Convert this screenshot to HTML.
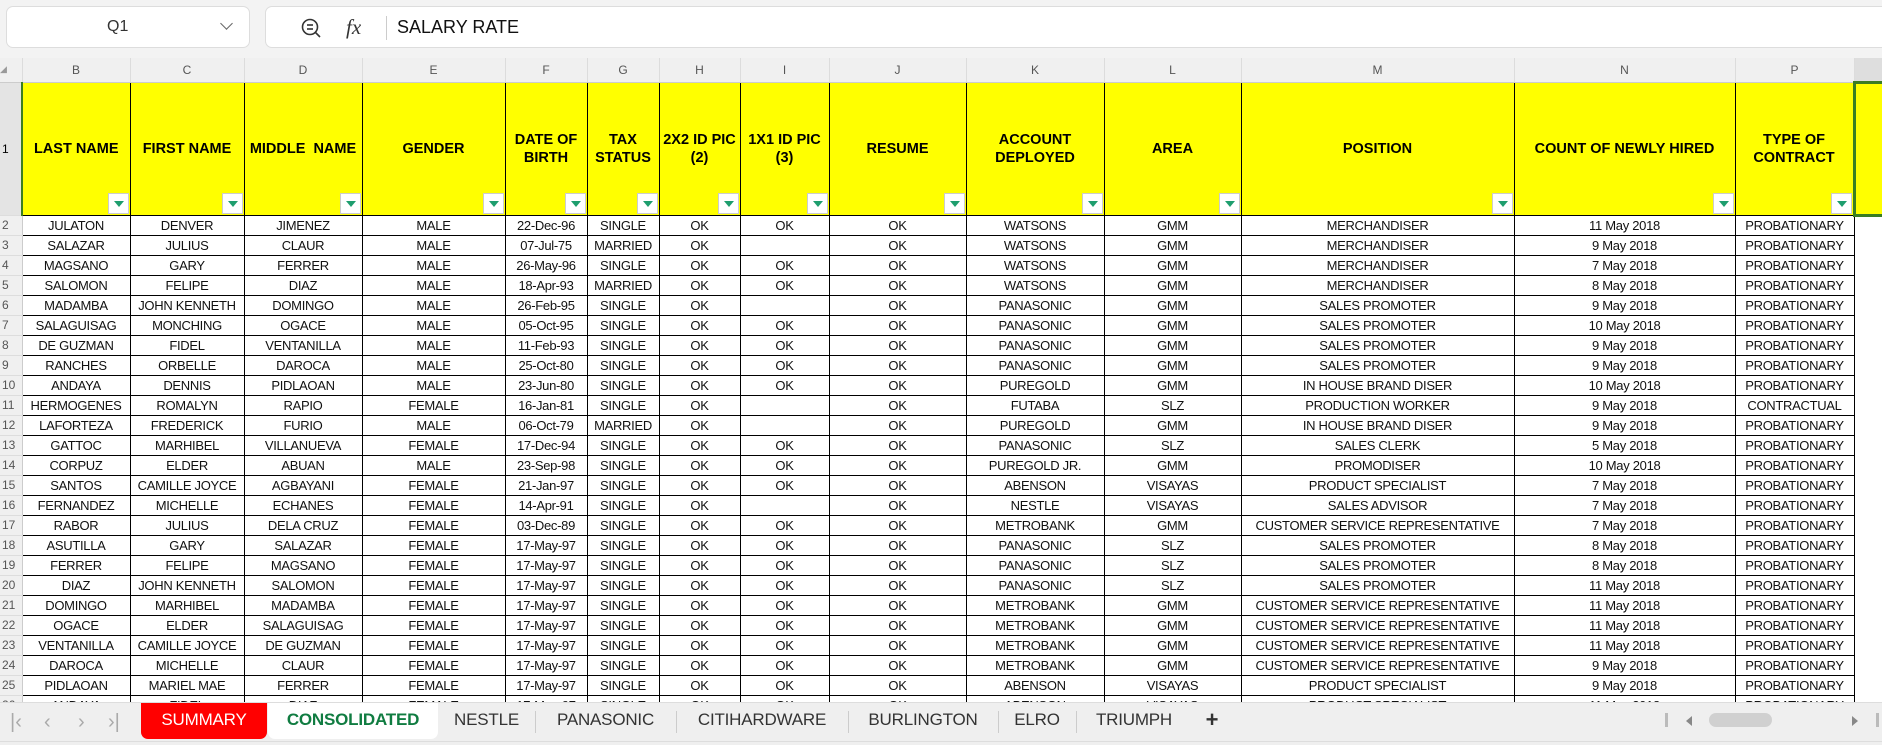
<!DOCTYPE html>
<html><head><meta charset="utf-8">
<style>
*{box-sizing:border-box;margin:0;padding:0}
body{width:1882px;height:745px;overflow:hidden;background:#f3f3f3;font-family:"Liberation Sans",sans-serif;position:relative}
.namebox{position:absolute;left:6px;top:6px;width:244px;height:42px;background:#fff;border:1px solid #ddd;border-radius:7px;font-size:16px;color:#333}
.namebox span{position:absolute;left:100px;top:11px}
.namebox i{position:absolute;right:18px;top:12px;width:9px;height:9px;border-right:1.5px solid #666;border-bottom:1.5px solid #666;transform:rotate(45deg)}
.fbox{position:absolute;left:265px;top:6px;width:1640px;height:42px;background:#fff;border:1px solid #ddd;border-radius:7px}
.fbox .txt{position:absolute;left:131px;top:10px;font-size:18px;color:#111}
.fbox .fx{position:absolute;left:80px;top:8px;font-family:"Liberation Serif",serif;font-style:italic;font-size:21px;color:#333}
.fbox .sep{position:absolute;left:120px;top:9px;width:1px;height:24px;background:#ccc}
.grid{position:absolute;left:0;top:58px;width:1882px;height:644px;overflow:hidden;background:#fff}
table{border-collapse:collapse;table-layout:fixed;position:absolute;left:0;top:0;width:1894px}
td{border:1px solid #000;text-align:center;font-size:13px;letter-spacing:-0.3px;color:#111;height:20px;white-space:nowrap;overflow:hidden;padding:0}
tr.ch td{background:#f0f0f0;border:none;border-right:1px solid #dcdcdc;border-bottom:1px solid #ccc;color:#555;font-size:12px;height:24px;letter-spacing:0}
td.rh{background:#f0f0f0;border:none;border-right:1px solid #ccc;border-bottom:1px solid #ddd;color:#555;font-size:12px;text-align:left;padding-left:2px;letter-spacing:0}
tr.hd td{background:#ffff00;height:133px;font-weight:bold;font-size:14.5px;letter-spacing:0;line-height:18px;white-space:normal;position:relative;color:#000}
tr.hd td.rh{background:#e4e4e4;font-weight:normal;font-size:12px;border-right:2px solid #3a7d22}
.f{position:absolute;right:1px;bottom:1px;width:21px;height:21px;background:#fff;border:1px solid #ccc}
.f:after{content:"";position:absolute;left:5px;top:7px;border-left:5px solid transparent;border-right:5px solid transparent;border-top:6px solid #1e9e6e}
td.q{border:none;border-left:1px solid #000}
tr.hd td.q{border:3px solid #3a7d22;border-right:none}
.tabs{position:absolute;left:0;top:702px;width:1882px;height:43px;background:#efefef;border-top:1px solid #ddd}
.tab{position:absolute;top:0;height:36px;font-size:17px;line-height:34px;text-align:center;color:#333;letter-spacing:-0.2px}
.sep2{position:absolute;top:8px;width:1px;height:22px;background:#ccc}
.nav{position:absolute;top:8px;color:#aaa;font-size:20px}
</style></head><body>
<div class="namebox"><span>Q1</span><i></i></div>
<div class="fbox">
<svg style="position:absolute;left:34px;top:10px" width="24" height="24" viewBox="0 0 24 24" fill="none" stroke="#333" stroke-width="1.6"><circle cx="10" cy="10" r="7.5"/><line x1="7" y1="8" x2="13" y2="8"/><line x1="7" y1="12" x2="13" y2="12"/><line x1="15.5" y1="15.5" x2="20" y2="20"/></svg>
<span class="fx">fx</span><div class="sep"></div><span class="txt">SALARY RATE</span></div>
<div class="grid">
<table>
<colgroup><col style="width:22px"><col style="width:108px"><col style="width:114px"><col style="width:118px"><col style="width:143px"><col style="width:82px"><col style="width:72px"><col style="width:81px"><col style="width:89px"><col style="width:137px"><col style="width:138px"><col style="width:137px"><col style="width:273px"><col style="width:221px"><col style="width:119px"><col style="width:40px"></colgroup>
<tr class="ch"><td style="text-align:left;color:#999;font-size:9px">◢</td><td>B</td><td>C</td><td>D</td><td>E</td><td>F</td><td>G</td><td>H</td><td>I</td><td>J</td><td>K</td><td>L</td><td>M</td><td>N</td><td>P</td><td style="background:#dedede"></td></tr>
<tr class="hd"><td class="rh">1</td><td>LAST NAME<div class="f"></div></td><td>FIRST NAME<div class="f"></div></td><td>MIDDLE &nbsp;NAME<div class="f"></div></td><td>GENDER<div class="f"></div></td><td>DATE OF BIRTH<div class="f"></div></td><td>TAX STATUS<div class="f"></div></td><td>2X2 ID PIC (2)<div class="f"></div></td><td>1X1 ID PIC (3)<div class="f"></div></td><td>RESUME<div class="f"></div></td><td>ACCOUNT DEPLOYED<div class="f"></div></td><td>AREA<div class="f"></div></td><td>POSITION<div class="f"></div></td><td>COUNT OF NEWLY HIRED<div class="f"></div></td><td>TYPE OF CONTRACT<div class="f"></div></td><td class="q"></td></tr>
<tr><td class="rh">2</td><td>JULATON</td><td>DENVER</td><td>JIMENEZ</td><td>MALE</td><td>22-Dec-96</td><td>SINGLE</td><td>OK</td><td>OK</td><td>OK</td><td>WATSONS</td><td>GMM</td><td>MERCHANDISER</td><td>11 May 2018</td><td>PROBATIONARY</td><td class="q"></td></tr>
<tr><td class="rh">3</td><td>SALAZAR</td><td>JULIUS</td><td>CLAUR</td><td>MALE</td><td>07-Jul-75</td><td>MARRIED</td><td>OK</td><td></td><td>OK</td><td>WATSONS</td><td>GMM</td><td>MERCHANDISER</td><td>9 May 2018</td><td>PROBATIONARY</td><td class="q"></td></tr>
<tr><td class="rh">4</td><td>MAGSANO</td><td>GARY</td><td>FERRER</td><td>MALE</td><td>26-May-96</td><td>SINGLE</td><td>OK</td><td>OK</td><td>OK</td><td>WATSONS</td><td>GMM</td><td>MERCHANDISER</td><td>7 May 2018</td><td>PROBATIONARY</td><td class="q"></td></tr>
<tr><td class="rh">5</td><td>SALOMON</td><td>FELIPE</td><td>DIAZ</td><td>MALE</td><td>18-Apr-93</td><td>MARRIED</td><td>OK</td><td>OK</td><td>OK</td><td>WATSONS</td><td>GMM</td><td>MERCHANDISER</td><td>8 May 2018</td><td>PROBATIONARY</td><td class="q"></td></tr>
<tr><td class="rh">6</td><td>MADAMBA</td><td>JOHN KENNETH</td><td>DOMINGO</td><td>MALE</td><td>26-Feb-95</td><td>SINGLE</td><td>OK</td><td></td><td>OK</td><td>PANASONIC</td><td>GMM</td><td>SALES PROMOTER</td><td>9 May 2018</td><td>PROBATIONARY</td><td class="q"></td></tr>
<tr><td class="rh">7</td><td>SALAGUISAG</td><td>MONCHING</td><td>OGACE</td><td>MALE</td><td>05-Oct-95</td><td>SINGLE</td><td>OK</td><td>OK</td><td>OK</td><td>PANASONIC</td><td>GMM</td><td>SALES PROMOTER</td><td>10 May 2018</td><td>PROBATIONARY</td><td class="q"></td></tr>
<tr><td class="rh">8</td><td>DE GUZMAN</td><td>FIDEL</td><td>VENTANILLA</td><td>MALE</td><td>11-Feb-93</td><td>SINGLE</td><td>OK</td><td>OK</td><td>OK</td><td>PANASONIC</td><td>GMM</td><td>SALES PROMOTER</td><td>9 May 2018</td><td>PROBATIONARY</td><td class="q"></td></tr>
<tr><td class="rh">9</td><td>RANCHES</td><td>ORBELLE</td><td>DAROCA</td><td>MALE</td><td>25-Oct-80</td><td>SINGLE</td><td>OK</td><td>OK</td><td>OK</td><td>PANASONIC</td><td>GMM</td><td>SALES PROMOTER</td><td>9 May 2018</td><td>PROBATIONARY</td><td class="q"></td></tr>
<tr><td class="rh">10</td><td>ANDAYA</td><td>DENNIS</td><td>PIDLAOAN</td><td>MALE</td><td>23-Jun-80</td><td>SINGLE</td><td>OK</td><td>OK</td><td>OK</td><td>PUREGOLD</td><td>GMM</td><td>IN HOUSE BRAND DISER</td><td>10 May 2018</td><td>PROBATIONARY</td><td class="q"></td></tr>
<tr><td class="rh">11</td><td>HERMOGENES</td><td>ROMALYN</td><td>RAPIO</td><td>FEMALE</td><td>16-Jan-81</td><td>SINGLE</td><td>OK</td><td></td><td>OK</td><td>FUTABA</td><td>SLZ</td><td>PRODUCTION WORKER</td><td>9 May 2018</td><td>CONTRACTUAL</td><td class="q"></td></tr>
<tr><td class="rh">12</td><td>LAFORTEZA</td><td>FREDERICK</td><td>FURIO</td><td>MALE</td><td>06-Oct-79</td><td>MARRIED</td><td>OK</td><td></td><td>OK</td><td>PUREGOLD</td><td>GMM</td><td>IN HOUSE BRAND DISER</td><td>9 May 2018</td><td>PROBATIONARY</td><td class="q"></td></tr>
<tr><td class="rh">13</td><td>GATTOC</td><td>MARHIBEL</td><td>VILLANUEVA</td><td>FEMALE</td><td>17-Dec-94</td><td>SINGLE</td><td>OK</td><td>OK</td><td>OK</td><td>PANASONIC</td><td>SLZ</td><td>SALES CLERK</td><td>5 May 2018</td><td>PROBATIONARY</td><td class="q"></td></tr>
<tr><td class="rh">14</td><td>CORPUZ</td><td>ELDER</td><td>ABUAN</td><td>MALE</td><td>23-Sep-98</td><td>SINGLE</td><td>OK</td><td>OK</td><td>OK</td><td>PUREGOLD JR.</td><td>GMM</td><td>PROMODISER</td><td>10 May 2018</td><td>PROBATIONARY</td><td class="q"></td></tr>
<tr><td class="rh">15</td><td>SANTOS</td><td>CAMILLE JOYCE</td><td>AGBAYANI</td><td>FEMALE</td><td>21-Jan-97</td><td>SINGLE</td><td>OK</td><td>OK</td><td>OK</td><td>ABENSON</td><td>VISAYAS</td><td>PRODUCT SPECIALIST</td><td>7 May 2018</td><td>PROBATIONARY</td><td class="q"></td></tr>
<tr><td class="rh">16</td><td>FERNANDEZ</td><td>MICHELLE</td><td>ECHANES</td><td>FEMALE</td><td>14-Apr-91</td><td>SINGLE</td><td>OK</td><td></td><td>OK</td><td>NESTLE</td><td>VISAYAS</td><td>SALES ADVISOR</td><td>7 May 2018</td><td>PROBATIONARY</td><td class="q"></td></tr>
<tr><td class="rh">17</td><td>RABOR</td><td>JULIUS</td><td>DELA CRUZ</td><td>FEMALE</td><td>03-Dec-89</td><td>SINGLE</td><td>OK</td><td>OK</td><td>OK</td><td>METROBANK</td><td>GMM</td><td>CUSTOMER SERVICE REPRESENTATIVE</td><td>7 May 2018</td><td>PROBATIONARY</td><td class="q"></td></tr>
<tr><td class="rh">18</td><td>ASUTILLA</td><td>GARY</td><td>SALAZAR</td><td>FEMALE</td><td>17-May-97</td><td>SINGLE</td><td>OK</td><td>OK</td><td>OK</td><td>PANASONIC</td><td>SLZ</td><td>SALES PROMOTER</td><td>8 May 2018</td><td>PROBATIONARY</td><td class="q"></td></tr>
<tr><td class="rh">19</td><td>FERRER</td><td>FELIPE</td><td>MAGSANO</td><td>FEMALE</td><td>17-May-97</td><td>SINGLE</td><td>OK</td><td>OK</td><td>OK</td><td>PANASONIC</td><td>SLZ</td><td>SALES PROMOTER</td><td>8 May 2018</td><td>PROBATIONARY</td><td class="q"></td></tr>
<tr><td class="rh">20</td><td>DIAZ</td><td>JOHN KENNETH</td><td>SALOMON</td><td>FEMALE</td><td>17-May-97</td><td>SINGLE</td><td>OK</td><td>OK</td><td>OK</td><td>PANASONIC</td><td>SLZ</td><td>SALES PROMOTER</td><td>11 May 2018</td><td>PROBATIONARY</td><td class="q"></td></tr>
<tr><td class="rh">21</td><td>DOMINGO</td><td>MARHIBEL</td><td>MADAMBA</td><td>FEMALE</td><td>17-May-97</td><td>SINGLE</td><td>OK</td><td>OK</td><td>OK</td><td>METROBANK</td><td>GMM</td><td>CUSTOMER SERVICE REPRESENTATIVE</td><td>11 May 2018</td><td>PROBATIONARY</td><td class="q"></td></tr>
<tr><td class="rh">22</td><td>OGACE</td><td>ELDER</td><td>SALAGUISAG</td><td>FEMALE</td><td>17-May-97</td><td>SINGLE</td><td>OK</td><td>OK</td><td>OK</td><td>METROBANK</td><td>GMM</td><td>CUSTOMER SERVICE REPRESENTATIVE</td><td>11 May 2018</td><td>PROBATIONARY</td><td class="q"></td></tr>
<tr><td class="rh">23</td><td>VENTANILLA</td><td>CAMILLE JOYCE</td><td>DE GUZMAN</td><td>FEMALE</td><td>17-May-97</td><td>SINGLE</td><td>OK</td><td>OK</td><td>OK</td><td>METROBANK</td><td>GMM</td><td>CUSTOMER SERVICE REPRESENTATIVE</td><td>11 May 2018</td><td>PROBATIONARY</td><td class="q"></td></tr>
<tr><td class="rh">24</td><td>DAROCA</td><td>MICHELLE</td><td>CLAUR</td><td>FEMALE</td><td>17-May-97</td><td>SINGLE</td><td>OK</td><td>OK</td><td>OK</td><td>METROBANK</td><td>GMM</td><td>CUSTOMER SERVICE REPRESENTATIVE</td><td>9 May 2018</td><td>PROBATIONARY</td><td class="q"></td></tr>
<tr><td class="rh">25</td><td>PIDLAOAN</td><td>MARIEL MAE</td><td>FERRER</td><td>FEMALE</td><td>17-May-97</td><td>SINGLE</td><td>OK</td><td>OK</td><td>OK</td><td>ABENSON</td><td>VISAYAS</td><td>PRODUCT SPECIALIST</td><td>9 May 2018</td><td>PROBATIONARY</td><td class="q"></td></tr>
<tr><td class="rh">26</td><td>ANDAYA</td><td>FIDEL</td><td>DIAZ</td><td>FEMALE</td><td>17-May-97</td><td>SINGLE</td><td>OK</td><td>OK</td><td>OK</td><td>ABENSON</td><td>VISAYAS</td><td>PRODUCT SPECIALIST</td><td>11 May 2018</td><td>PROBATIONARY</td><td class="q"></td></tr>
</table>
</div>
<div class="tabs">
<span class="nav" style="left:10px">|&#8249;</span><span class="nav" style="left:44px">&#8249;</span><span class="nav" style="left:78px">&#8250;</span><span class="nav" style="left:108px">&#8250;|</span>
<div class="tab" style="left:141px;width:126px;background:#ff0000;color:#fff;border-radius:0 0 7px 7px">SUMMARY</div>
<div class="tab" style="left:268px;width:170px;background:#fff;color:#107c41;font-weight:bold;border-radius:0 0 7px 7px">CONSOLIDATED</div>
<div class="tab" style="left:438px;width:97px">NESTLE</div><div class="sep2" style="left:535px"></div>
<div class="tab" style="left:535px;width:141px">PANASONIC</div><div class="sep2" style="left:676px"></div>
<div class="tab" style="left:676px;width:172px">CITIHARDWARE</div><div class="sep2" style="left:848px"></div>
<div class="tab" style="left:848px;width:150px">BURLINGTON</div><div class="sep2" style="left:998px"></div>
<div class="tab" style="left:998px;width:78px">ELRO</div><div class="sep2" style="left:1076px"></div>
<div class="tab" style="left:1076px;width:116px">TRIUMPH</div>
<div class="tab" style="left:1202px;width:20px;font-size:22px;font-weight:bold">+</div>
<div style="position:absolute;left:1665px;top:10px;width:3px;height:14px;background:#bbb"></div>
<div style="position:absolute;left:1686px;top:13px;border-top:5px solid transparent;border-bottom:5px solid transparent;border-right:6px solid #888"></div>
<div style="position:absolute;left:1709px;top:10px;width:63px;height:14px;border-radius:7px;background:#d0d0d0"></div>
<div style="position:absolute;left:1852px;top:13px;border-top:5px solid transparent;border-bottom:5px solid transparent;border-left:6px solid #888"></div>
<div style="position:absolute;left:1876px;top:10px;width:3px;height:14px;background:#bbb"></div>
<div style="position:absolute;left:0;top:38px;width:1882px;height:1px;background:#ddd"></div>
</div>
</body></html>
